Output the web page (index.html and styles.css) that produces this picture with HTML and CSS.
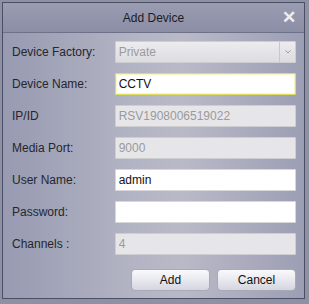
FILE: index.html
```html
<!DOCTYPE html>
<html lang="en">
  <head>
    <meta charset="UTF-8" />
    <title>Add Device</title>
    <link rel="stylesheet" href="styles.css">
  </head>
  <body>
    <div class="dialog">
      <div class="title-bar">
        <span class="title">Add Device</span>
        <span class="close">&#x2715;</span>
      </div>
      <form class="form">
        <div class="row">
          <label>Device Factory:</label>
          <div class="field select disabled">
            <span>Private</span>
            <span class="arrow">
              <svg width="6" height="4" viewBox="0 0 6 4">
                <path d="M0.5 0.5 L3 3 L5.5 0.5" fill="none" stroke="#9a9aa0" stroke-width="1" />
              </svg>
            </span>
          </div>
        </div>
        <div class="row">
          <label>Device Name:</label>
          <input class="field focus" type="text" value="CCTV" />
        </div>
        <div class="row">
          <label>IP/ID</label>
          <input class="field disabled" type="text" value="RSV1908006519022" disabled />
        </div>
        <div class="row">
          <label>Media Port:</label>
          <input class="field disabled" type="text" value="9000" disabled />
        </div>
        <div class="row">
          <label>User Name:</label>
          <input class="field" type="text" value="admin" />
        </div>
        <div class="row">
          <label>Password:</label>
          <input class="field" type="password" value="" />
        </div>
        <div class="row">
          <label>Channels :</label>
          <input class="field disabled" type="text" value="4" disabled />
        </div>
        <div class="actions">
          <button type="button">Add</button>
          <button type="button">Cancel</button>
        </div>
      </form>
    </div>
  </body>
</html>
```

FILE: styles.css
```css
body {
  margin: 0;
  width: 309px;
  height: 304px;
  background-color: #8e90a4;
  font-family: "Liberation Sans", Arial, sans-serif;
  overflow: hidden;
}

.dialog {
  margin: 2px 2px 0 2px;
  width: 303px;
  height: 297px;
  box-sizing: border-box;
  border: 1px solid #4a4f66;
  background: linear-gradient(to right, #979ab1 0%, #b4b5c4 45%, #b9b9c7 60%, #9c9eb4 100%);
  display: flex;
  flex-direction: column;
}

.title-bar {
  height: 29px;
  flex-shrink: 0;
  display: flex;
  align-items: center;
  justify-content: center;
  position: relative;
  background: linear-gradient(to bottom, #9a9cb2, #8c8ea6);
  border-bottom: 1px solid #6e718a;
}

.title {
  font-size: 12px;
  color: #1c1c24;
}

.close {
  position: absolute;
  right: 8px;
  top: 4px;
  font-size: 17px;
  font-weight: bold;
  color: #eeeef2;
}

.form {
  padding: 8px 8px 0 9px;
  display: flex;
  flex-direction: column;
  gap: 10px;
}

.row {
  display: flex;
  align-items: center;
  height: 22px;
}

label {
  width: 103px;
  font-size: 12px;
  color: #26262e;
}

.field {
  width: 182px;
  height: 22px;
  box-sizing: border-box;
  margin: 0;
  padding: 0 3px;
  border: 1px solid #d8d8dc;
  border-radius: 1px;
  background-color: #ffffff;
  font-family: "Liberation Sans", Arial, sans-serif;
  font-size: 12px;
  color: #111;
  outline: none;
}

.field.focus {
  border: 1px solid #dede5c;
  box-shadow: inset 0 0 0 1px #f8f8c0;
}

.field.disabled {
  background-color: #e6e6e8;
  border-color: #cdcdd2;
  color: #9a9a9e;
}

.select {
  display: flex;
  align-items: center;
  padding-right: 0;
  background: linear-gradient(to bottom, #ececee, #dddde0);
}

.select span:first-child {
  flex: 1;
}

.arrow {
  width: 15px;
  height: 20px;
  border-left: 1px solid #c8c8cc;
  display: flex;
  align-items: center;
  justify-content: center;
}

.actions {
  display: flex;
  justify-content: flex-end;
  gap: 7px;
  margin-top: 4px;
}

button {
  width: 79px;
  height: 22px;
  border: 1px solid #a8aab8;
  border-radius: 4px;
  background: linear-gradient(to bottom, #fafafc, #e6e6ee 55%, #d4d5e0);
  font-family: "Liberation Sans", Arial, sans-serif;
  font-size: 12px;
  color: #111;
  padding: 0;
}
```
